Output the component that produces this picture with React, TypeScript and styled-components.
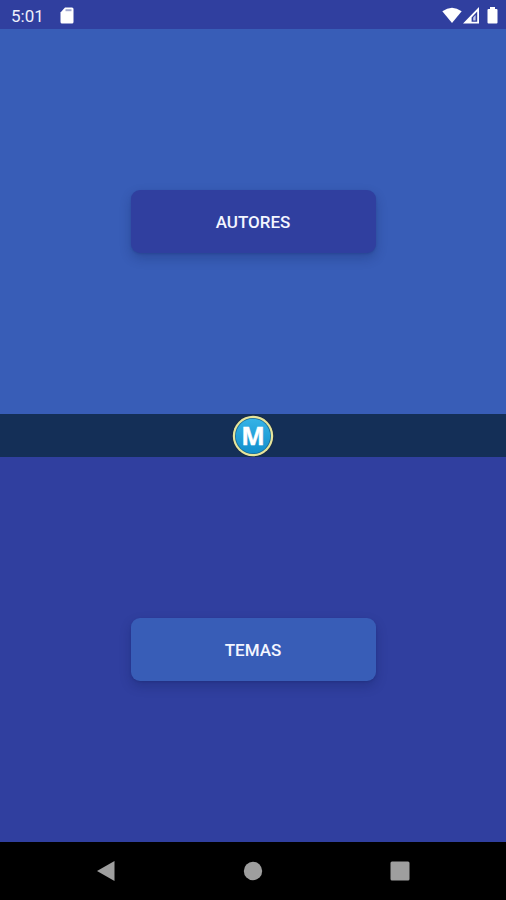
import React from "react";
import styled, { createGlobalStyle } from "styled-components";

const colors = {
  indigo: "#303f9f",
  blue: "#385db7",
  navy: "#142f57",
  grey: "#9e9e9e",
};

const GlobalStyle = createGlobalStyle`
  *, *::before, *::after { box-sizing: border-box; }
  body { margin: 0; font-family: Roboto, "Liberation Sans", sans-serif; }
`;

const Screen = styled.div`
  display: flex;
  flex-direction: column;
  min-height: 100vh;
  background: ${colors.indigo};
`;

const StatusBar = styled.header`
  display: flex;
  align-items: center;
  justify-content: space-between;
  height: 29px;
  padding: 2px 8px 0 11px;
  background: ${colors.indigo};
  color: #eef0fb;
`;

const StatusGroup = styled.div<{ $gap: number }>`
  display: flex;
  align-items: center;
  gap: ${({ $gap }) => $gap}px;
`;

const Clock = styled.time`
  font-size: 17px;
  line-height: 20px;
`;

const Icon = styled.svg`
  display: block;
  flex: none;
`;

const Panel = styled.section<{ $color: string }>`
  display: flex;
  flex: 1;
  align-items: center;
  justify-content: center;
  padding: 24px;
  background: ${({ $color }) => $color};
`;

const MenuButton = styled.button<{ $color: string }>`
  width: 245px;
  max-width: 100%;
  height: 63px;
  border: 0;
  border-radius: 9px;
  background: ${({ $color }) => $color};
  box-shadow: 0 5px 12px rgba(10, 20, 70, 0.24), 0 1px 2px rgba(10, 20, 70, 0.14);
  color: #f4f6ff;
  font-family: inherit;
  font-size: 17px;
  font-weight: 500;
  line-height: 20px;
  text-transform: uppercase;
  cursor: pointer;
`;

const Band = styled.div`
  display: flex;
  align-items: center;
  justify-content: center;
  height: 43px;
  background: ${colors.navy};
`;

const NavBar = styled.nav`
  display: grid;
  grid-template-columns: repeat(3, 1fr);
  height: 58px;
  padding: 0 32px;
  background: #000;
`;

const NavButton = styled.button`
  display: flex;
  align-items: center;
  justify-content: center;
  padding: 0;
  border: 0;
  background: none;
  color: ${colors.grey};
  cursor: pointer;
`;

function Logo() {
  return (
    <Icon width="42" height="42" viewBox="0 0 42 42" role="img" aria-label="M">
      <defs>
        <linearGradient id="disc" x1="0" y1="0" x2="0" y2="1">
          <stop offset="0" stopColor="#35b3e6" />
          <stop offset="1" stopColor="#128fcd" />
        </linearGradient>
      </defs>
      <circle cx="21" cy="21" r="21" fill="#1b2b42" />
      <circle cx="21" cy="21" r="20.2" fill="#e6e59c" />
      <circle cx="21" cy="21" r="18" fill="#176a96" />
      <circle cx="21" cy="21" r="17.2" fill="url(#disc)" />
      <text
        x="21"
        y="30"
        textAnchor="middle"
        fill="#ffffff"
        fontFamily='"Open Sans", sans-serif'
        fontSize="25"
        fontWeight="700"
        stroke="#ffffff"
        strokeWidth="0.4"
      >
        M
      </text>
    </Icon>
  );
}

export default function App() {
  return (
    <>
      <GlobalStyle />
      <Screen>
        <StatusBar>
          <StatusGroup $gap={16}>
            <Clock>5:01</Clock>
            <Icon width="14" height="17" viewBox="0 0 14 17" aria-hidden="true">
              <path
                d="M5 0.5h7A1.5 1.5 0 0 1 13.5 2v13A1.5 1.5 0 0 1 12 16.5H2A1.5 1.5 0 0 1 .5 15V5.5z"
                fill="#fff"
              />
              <path d="M5.5 3.2h6" stroke="#a3a9cf" strokeWidth="2" />
            </Icon>
          </StatusGroup>
          <StatusGroup $gap={1}>
            <Icon width="20" height="17" viewBox="0 0 20 17" aria-hidden="true">
              <path d="M0.3 4.2Q10 -2.8 19.7 4.2L10 16z" fill="#fff" />
            </Icon>
            <Icon width="16" height="17" viewBox="0 0 16 17" aria-hidden="true">
              <path
                d="M16 0v16.5H0zM14.2 4.4L8.6 10.4v4.4h5.6z"
                fill="#fff"
                fillRule="evenodd"
              />
              <path d="M10.2 10.6l2.4-2.6v5.4h-2.4z" fill="#c3c8ea" />
            </Icon>
            <Icon width="18" height="17" viewBox="0 0 18 17" aria-hidden="true">
              <path
                d="M10 0h5v2h1.5A1 1 0 0 1 17.5 3v12.5a1 1 0 0 1-1 1h-8a1 1 0 0 1-1-1V3a1 1 0 0 1 1-1H10z"
                fill="#fff"
              />
            </Icon>
          </StatusGroup>
        </StatusBar>
        <Panel $color={colors.blue}>
          <MenuButton type="button" $color={colors.indigo}>Autores</MenuButton>
        </Panel>
        <Band>
          <Logo />
        </Band>
        <Panel $color={colors.indigo}>
          <MenuButton type="button" $color={colors.blue}>Temas</MenuButton>
        </Panel>
        <NavBar>
          <NavButton type="button" aria-label="Back">
            <Icon width="20" height="22" viewBox="0 0 20 22" aria-hidden="true">
              <path d="M18.5 1v20L1 11z" fill="currentColor" />
            </Icon>
          </NavButton>
          <NavButton type="button" aria-label="Home">
            <Icon width="20" height="20" viewBox="0 0 20 20" aria-hidden="true">
              <circle cx="10" cy="10" r="9.2" fill="currentColor" />
            </Icon>
          </NavButton>
          <NavButton type="button" aria-label="Recent apps">
            <Icon width="20" height="20" viewBox="0 0 20 20" aria-hidden="true">
              <rect x="0.5" y="0.5" width="19" height="19" rx="1.5" fill="currentColor" />
            </Icon>
          </NavButton>
        </NavBar>
      </Screen>
    </>
  );
}
